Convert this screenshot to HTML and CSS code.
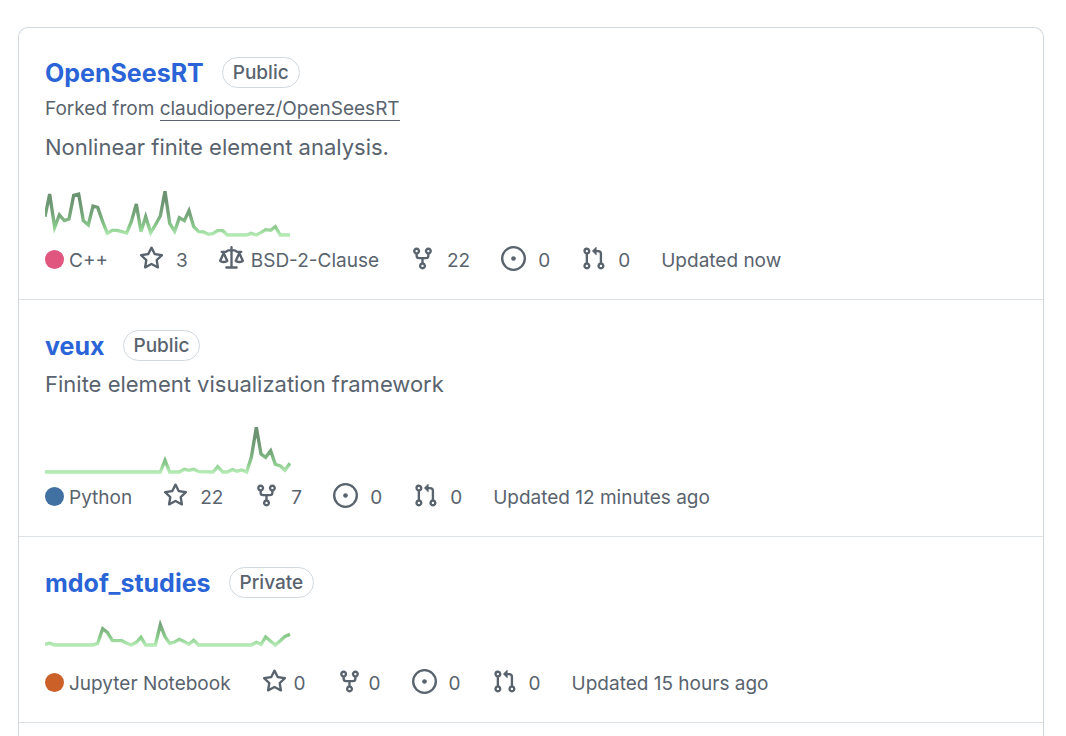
FILE: index.html
```html
<!DOCTYPE html>
<html lang="en">
<head>
    <meta charset="UTF-8">
    <title>Repositories</title>
    <link rel="stylesheet" href="styles.css">
</head>

<body>
    <!-- shared icons and sparkline gradient -->
    <svg class="defs" width="0" height="0" aria-hidden="true">
        <defs>
            <linearGradient id="activity" gradientUnits="userSpaceOnUse" x1="0" y1="147" x2="0" y2="0">
                <stop offset="0.04" stop-color="#b4eab4"></stop>
                <stop offset="0.2" stop-color="#8bcb8d"></stop>
                <stop offset="0.45" stop-color="#76a67a"></stop>
                <stop offset="0.75" stop-color="#6c9372"></stop>
            </linearGradient>
            <symbol id="star" viewBox="0 0 16 16">
                <path d="M8 .25a.75.75 0 0 1 .673.418l1.882 3.815 4.21.612a.75.75 0 0 1 .416 1.279l-3.046 2.97.719 4.192a.751.751 0 0 1-1.088.791L8 12.347l-3.766 1.98a.75.75 0 0 1-1.088-.79l.72-4.194L.818 6.374a.75.75 0 0 1 .416-1.28l4.21-.611L7.327.668A.75.75 0 0 1 8 .25Zm0 2.445L6.615 5.5a.75.75 0 0 1-.564.41l-3.097.45 2.24 2.184a.75.75 0 0 1 .216.664l-.528 3.084 2.769-1.456a.75.75 0 0 1 .698 0l2.77 1.456-.53-3.084a.75.75 0 0 1 .216-.664l2.24-2.183-3.096-.45a.75.75 0 0 1-.564-.41L8 2.694Z"></path>
            </symbol>
            <symbol id="law" viewBox="0 0 16 16">
                <path d="M8.75.75V2h.985c.304 0 .603.08.867.231l1.29.736c.038.022.08.033.124.033h2.234a.75.75 0 0 1 0 1.5h-.427l2.111 4.692a.75.75 0 0 1-.154.838l-.53-.53.529.531-.001.002-.002.002-.006.006-.006.005-.01.01-.045.04c-.21.176-.441.327-.686.45C14.556 10.78 13.88 11 13 11a4.498 4.498 0 0 1-2.023-.454 3.544 3.544 0 0 1-.686-.45l-.045-.04-.016-.015-.006-.006-.004-.004v-.001a.75.75 0 0 1-.154-.838L12.178 4.5h-.162c-.305 0-.604-.079-.868-.231l-1.29-.736a.245.245 0 0 0-.124-.033H8.75V13h2.5a.75.75 0 0 1 0 1.5h-6.5a.75.75 0 0 1 0-1.5h2.5V3.5h-.984a.245.245 0 0 0-.124.033l-1.289.737c-.265.15-.564.23-.869.23h-.162l2.112 4.692a.75.75 0 0 1-.154.838l-.53-.53.529.531-.001.002-.002.002-.006.006-.016.015-.045.04c-.21.176-.441.327-.686.45C4.556 10.78 3.88 11 3 11a4.498 4.498 0 0 1-2.023-.454 3.544 3.544 0 0 1-.686-.45l-.045-.04-.016-.015-.006-.006-.004-.004v-.001a.75.75 0 0 1-.154-.838L2.178 4.5H1.75a.75.75 0 0 1 0-1.5h2.234a.249.249 0 0 0 .125-.033l1.288-.737c.265-.15.564-.23.869-.23h.984V.75a.75.75 0 0 1 1.5 0Zm2.945 8.477c.285.135.718.273 1.305.273s1.02-.138 1.305-.273L13 6.327Zm-10 0c.285.135.718.273 1.305.273s1.02-.138 1.305-.273L3 6.327Z"></path>
            </symbol>
            <symbol id="fork" viewBox="0 0 16 16">
                <path d="M5 5.372v.878c0 .414.336.75.75.75h4.5a.75.75 0 0 0 .75-.75v-.878a2.25 2.25 0 1 1 1.5 0v.878a2.25 2.25 0 0 1-2.25 2.25h-1.5v2.128a2.251 2.251 0 1 1-1.5 0V8.5h-1.5A2.25 2.25 0 0 1 3.5 6.25v-.878a2.25 2.25 0 1 1 1.5 0ZM5 3.25a.75.75 0 1 0-1.5 0 .75.75 0 0 0 1.5 0Zm6.75.75a.75.75 0 1 0 0-1.5.75.75 0 0 0 0 1.5Zm-3 8.75a.75.75 0 1 0-1.5 0 .75.75 0 0 0 1.5 0Z"></path>
            </symbol>
            <symbol id="issue" viewBox="0 0 16 16">
                <path d="M8 9.5a1.5 1.5 0 1 0 0-3 1.5 1.5 0 0 0 0 3Z"></path>
                <path d="M8 0a8 8 0 1 1 0 16A8 8 0 0 1 8 0ZM1.5 8a6.5 6.5 0 1 0 13 0 6.5 6.5 0 0 0-13 0Z"></path>
            </symbol>
            <symbol id="pull" viewBox="0 0 16 16">
                <path d="M1.5 3.25a2.25 2.25 0 1 1 3 2.122v5.256a2.251 2.251 0 1 1-1.5 0V5.372A2.25 2.25 0 0 1 1.5 3.25Zm5.677-.177L9.573.677A.25.25 0 0 1 10 .854V2.5h1A2.5 2.5 0 0 1 13.5 5v5.628a2.251 2.251 0 1 1-1.5 0V5a1 1 0 0 0-1-1h-1v1.646a.25.25 0 0 1-.427.177L7.177 3.427a.25.25 0 0 1 0-.354ZM3.75 2.5a.75.75 0 1 0 0 1.5.75.75 0 0 0 0-1.5Zm0 9.5a.75.75 0 1 0 0 1.5.75.75 0 0 0 0-1.5Zm8.25.75a.75.75 0 1 0 1.5 0 .75.75 0 0 0-1.5 0Z"></path>
            </symbol>
        </defs>
    </svg>

    <ul class="repos">
        <li class="repo">
            <div class="head">
                <h3><a href="#">OpenSeesRT</a></h3>
                <span class="label">Public</span>
            </div>
            <p class="forked">Forked from <a href="#">claudioperez/OpenSeesRT</a></p>
            <p class="desc">Nonlinear finite element analysis.</p>
            <svg class="spark" viewBox="0 0 738 150" role="img" aria-label="Past year of activity">
                <polyline points="0,86 14,18 29,118 43,81 58,98 72,93 86,22 101,18 115,98 130,111 144,54 158,58 173,101 187,136 202,127 216,127 230,131 245,135 259,101 274,48 288,131 302,86 317,134 331,111 346,84 360,10 374,106 389,130 403,89 418,98 432,68 446,116 461,131 475,132 490,139 504,137 518,128 533,128 547,141 605,141 619,136 634,141 648,134 662,125 677,127 691,116 706,141 735,141"></polyline>
            </svg>
            <div class="meta">
                <span class="lang"><i class="dot cpp"></i>C++</span>
                <a href="#" class="stat"><svg><use href="#star"></use></svg>3</a>
                <span class="stat license"><svg><use href="#law"></use></svg>BSD-2-Clause</span>
                <a href="#" class="stat"><svg><use href="#fork"></use></svg>22</a>
                <a href="#" class="stat"><svg><use href="#issue"></use></svg>0</a>
                <a href="#" class="stat"><svg><use href="#pull"></use></svg>0</a>
                <span>Updated now</span>
            </div>
        </li>
        <li class="repo">
            <div class="head">
                <h3><a href="#">veux</a></h3>
                <span class="label">Public</span>
            </div>
            <p class="desc">Finite element visualization framework</p>
            <svg class="spark" viewBox="0 0 738 150" role="img" aria-label="Past year of activity">
                <polyline points="0,141 346,141 360,106 374,141 403,141 418,133 432,136 446,133 461,140 504,141 518,125 533,141 547,141 562,134 576,139 590,135 605,141 619,97 634,7 648,87 662,97 677,77 691,118 706,123 720,136 735,115"></polyline>
            </svg>
            <div class="meta">
                <span class="lang"><i class="dot python"></i>Python</span>
                <a href="#" class="stat"><svg><use href="#star"></use></svg>22</a>
                <a href="#" class="stat"><svg><use href="#fork"></use></svg>7</a>
                <a href="#" class="stat"><svg><use href="#issue"></use></svg>0</a>
                <a href="#" class="stat"><svg><use href="#pull"></use></svg>0</a>
                <span>Updated 12 minutes ago</span>
            </div>
        </li>
        <li class="repo bare">
            <div class="head">
                <h3><a href="#">mdof_studies</a></h3>
                <span class="label">Private</span>
            </div>
            <svg class="spark" viewBox="0 0 738 150" role="img" aria-label="Past year of activity">
                <polyline points="0,139 14,136 29,141 144,141 158,136 173,92 187,103 202,128 230,128 245,136 259,141 274,133 288,118 302,141 331,141 346,80 360,116 374,136 389,132 403,124 418,131 432,139 446,127 461,141 619,141 634,133 648,139 662,117 677,130 691,141 706,128 720,115 735,109"></polyline>
            </svg>
            <div class="meta">
                <span class="lang"><i class="dot jupyter"></i>Jupyter Notebook</span>
                <a href="#" class="stat tight"><svg><use href="#star"></use></svg>0</a>
                <a href="#" class="stat tight"><svg><use href="#fork"></use></svg>0</a>
                <a href="#" class="stat"><svg><use href="#issue"></use></svg>0</a>
                <a href="#" class="stat"><svg><use href="#pull"></use></svg>0</a>
                <span>Updated 15 hours ago</span>
            </div>
        </li>
        <li class="repo"></li>
    </ul>
</body>
</html>
```
FILE: styles.css
```css
html,body{
    margin: 0;padding: 0;
}
body{
    background-color: #fff;
    color: #59636e;
    font-family: Inter, "Liberation Sans", sans-serif;
    font-size: 19px;
    line-height: 28px;
}
h3,p,ul{
    margin: 0; padding: 0; list-style: none;
}
a{
    color: inherit; text-decoration: none;
}
.defs{
    position: absolute;
}

/* list box, runs on below the fold */
.repos{
    margin: 27px 22px 0 18px;
    border: 1px solid #d1d9e0;
    border-bottom: none;
    border-radius: 10px 10px 0 0;
}
.repo{
    padding: 26px 26px 18px;
}
.repo + .repo{
    padding-top: 27px;
    border-top: 1px solid #dde2e7;
}
.repo:empty{
    padding: 14px 0 0;
}

/* name and visibility */
.head{
    display: flex;
    align-items: center;
    gap: 18px;
    height: 37px;
    margin-bottom: 1px;
}
.head h3{
    font-size: 25px;
    font-weight: 700;
    color: #2a64d6;
}
.label{
    padding: 0 10px;
    border: 1px solid #d1d9e0;
    border-radius: 16px;
    line-height: 29px;
    font-weight: 500;
}
.forked{
    margin: 4px 0 5px;
}
.forked a{
    border-bottom: 1px solid #59636e;
}
.desc{
    font-size: 22px;
    line-height: 38px;
}

/* activity line */
.spark{
    display: block;
    width: 246px; height: 50px;
    margin-top: 22px;
}
.head + .spark{
    margin-top: -4px;
    margin-bottom: 13px;
}
.spark polyline{
    fill: none;
    stroke: url(#activity);
    stroke-width: 10;
}

.meta{
    display: flex;
    align-items: center;
    gap: 31px;
    height: 40px;
    padding-top: 3px;
}
.lang{
    display: flex;
    align-items: center;
    gap: 5px;
}
.dot{
    width: 19px; height: 19px;
    margin-bottom: 4px;
    border-radius: 50%;
}
.cpp{background-color: #e0567f;}
.python{background-color: #4170a3;}
.jupyter{background-color: #cb6129;}
.stat{
    display: flex;
    align-items: center;
    gap: 12px;
}
.license,.tight{
    gap: 7px;
}
.stat svg{
    width: 25px; height: 25px;
    margin-bottom: 6px;
    fill: #59636e;
}
```
